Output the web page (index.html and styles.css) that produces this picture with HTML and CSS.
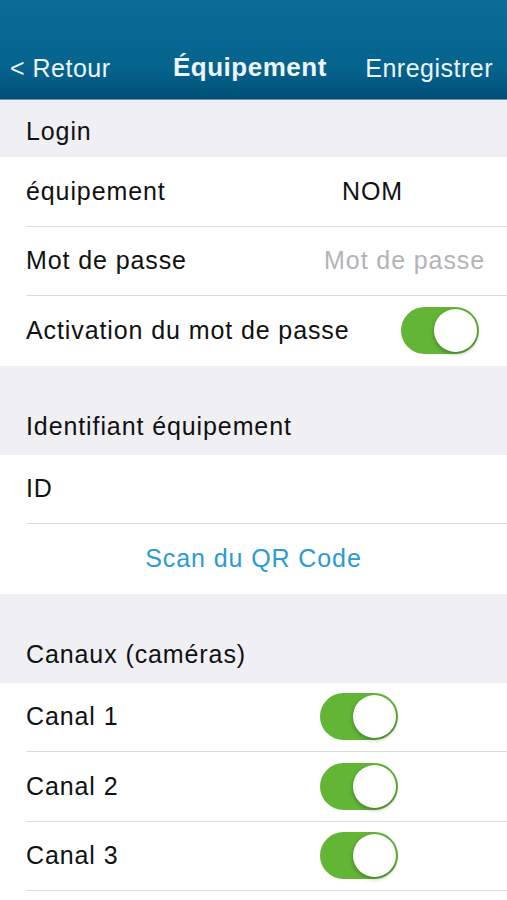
FILE: index.html
```html
<!DOCTYPE html>
<html lang="fr">
<head>
  <meta charset="UTF-8">
  <title>Équipement</title>
  <link rel="stylesheet" href="styles.css">
</head>
<body>
  <div class="navbar">
    <span class="nav-back">&lt; Retour</span>
    <span class="nav-title">Équipement</span>
    <span class="nav-save">Enregistrer</span>
  </div>

  <div class="section-head first">Login</div>
  <div class="group">
    <div class="row">
      <span class="label">équipement</span>
      <span class="value">NOM</span>
    </div>
    <div class="row">
      <span class="label">Mot de passe</span>
      <span class="placeholder">Mot de passe</span>
    </div>
    <div class="row">
      <span class="label">Activation du mot de passe</span>
      <span class="switch on pwd-switch"></span>
    </div>
  </div>

  <div class="section-head">Identifiant équipement</div>
  <div class="group">
    <div class="row">
      <span class="label">ID</span>
    </div>
    <div class="row action">Scan du QR Code</div>
  </div>

  <div class="section-head">Canaux (caméras)</div>
  <div class="group">
    <div class="row channel">
      <span class="label">Canal 1</span>
      <span class="switch on"></span>
    </div>
    <div class="row channel">
      <span class="label">Canal 2</span>
      <span class="switch on"></span>
    </div>
    <div class="row channel">
      <span class="label">Canal 3</span>
      <span class="switch on"></span>
    </div>
  </div>
</body>
</html>
```

FILE: styles.css
```css
body { margin: 0; font-family: "Liberation Sans", Arial, sans-serif; background: #fff; color: #111; }
.navbar { height: 100px; box-sizing: border-box; padding: 0 14px 16px 10px; display: flex; align-items: flex-end; justify-content: space-between; background: linear-gradient(#0b6c95, #05638d 70%, #014f76); border-bottom: 1px solid #6d93a8; color: #eef4f8; font-size: 25px; letter-spacing: 0.5px; }
.nav-title { font-weight: bold; font-size: 26px; margin-left: 24px; }
.section-head { background: #efeff4; padding: 0 26px 14px; height: 89px; box-sizing: border-box; display: flex; align-items: flex-end; font-size: 25px; letter-spacing: 0.9px; }
.section-head.first { height: 57px; padding-bottom: 11px; }
.group { background: #fff; }
.row { height: 69.5px; margin-left: 26px; border-bottom: 1px solid #dcdce0; box-sizing: border-box; display: flex; align-items: center; font-size: 25px; letter-spacing: 0.9px; padding-right: 22px; }
.group .row:last-child { border-bottom: none; }
.group:last-child .row:last-child { border-bottom: 1px solid #dcdce0; }
.value { margin-left: auto; margin-right: 82px; }
.placeholder { margin-left: auto; color: #b3b3b8; }
.action { margin-left: 0; padding-right: 0; justify-content: center; color: #2a9bd3; }
.switch { position: relative; width: 78px; height: 47px; border-radius: 24px; background: #e4e4e4; margin-left: auto; }
.switch.on { background: #62b535; }
.switch::after { content: ""; position: absolute; top: 2px; right: 2px; width: 43px; height: 43px; border-radius: 50%; background: #fff; box-shadow: 0 2px 4px rgba(0,0,0,0.3); }
.pwd-switch { margin-right: 6px; }
.channel .switch { margin-left: 0; }
.channel .label { width: 294px; }
```
